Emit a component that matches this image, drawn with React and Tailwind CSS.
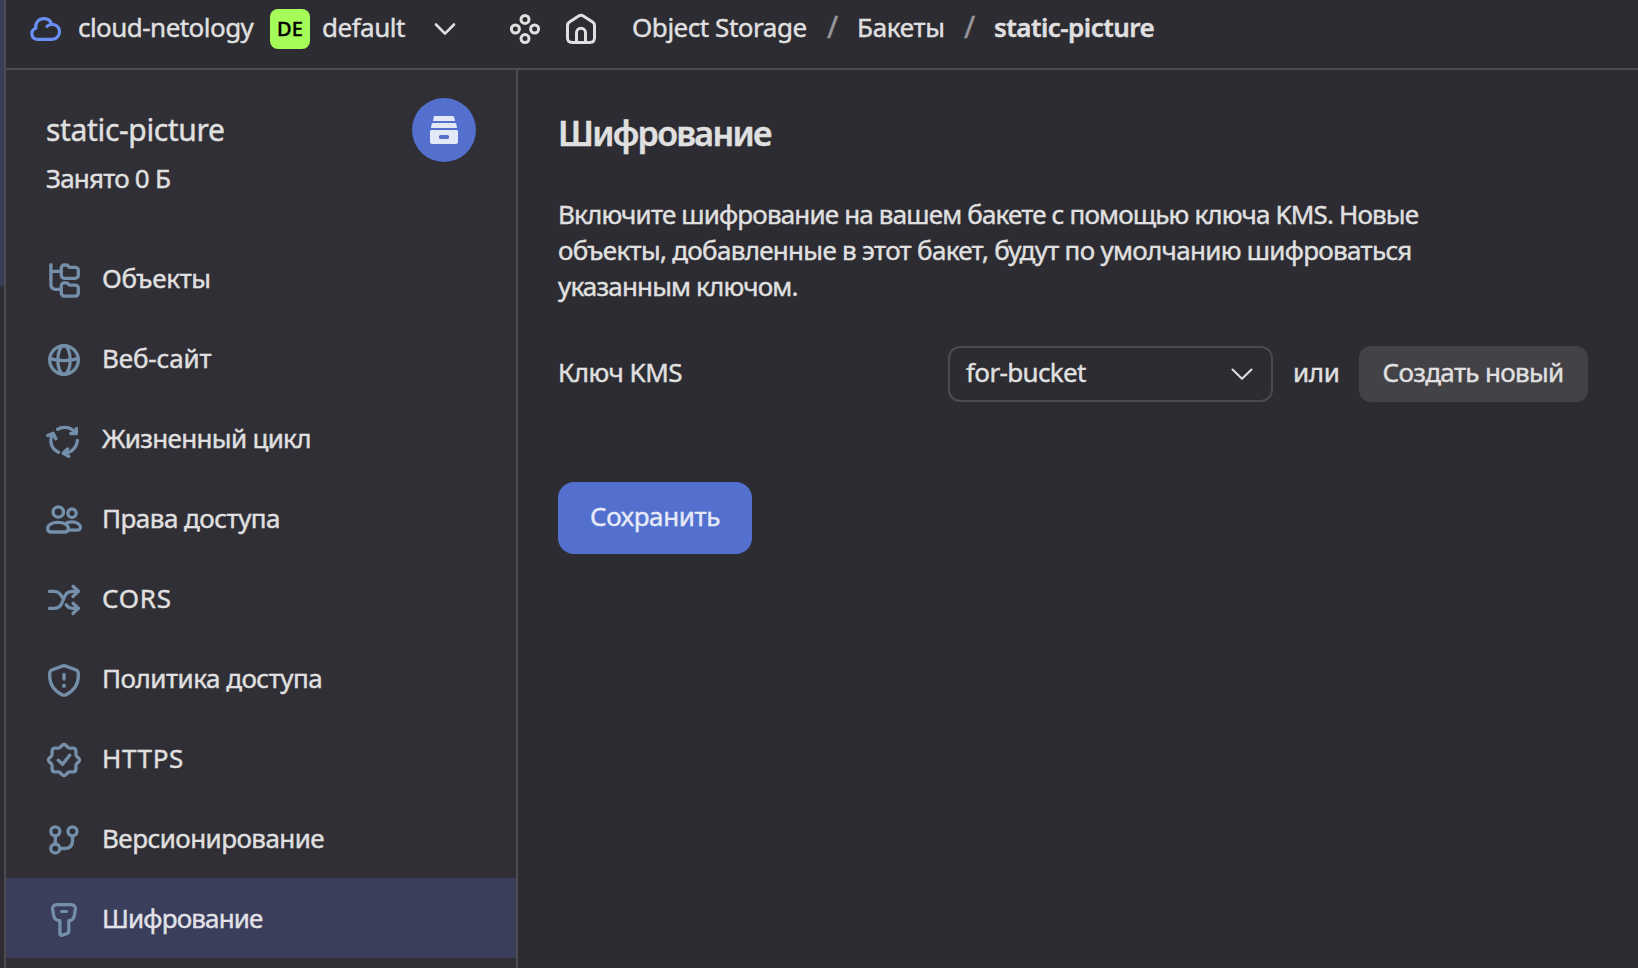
function Svg({ children, w = 36, h = 36, sw = 3.3, className = '' }) {
  return (
    <svg
      width={w}
      height={h}
      viewBox={`0 0 ${w} ${h}`}
      fill="none"
      stroke="currentColor"
      strokeWidth={sw}
      strokeLinecap="round"
      strokeLinejoin="round"
      className={`shrink-0 ${className}`}
    >
      {children}
    </svg>
  );
}

const SEAL = 'M18 2.5q1.2 0 2 .9l1.6 1.8q.9.9 2.2.9h3.1q3 0 3 3v3.1q0 1.3.9 2.2l1.8 1.6q.9.8.9 2';
const FOLDER = 'M15.3 6a3 3 0 0 1 3-3h2q1.1 0 1.8.9l.4.5q.7.9 1.8.9h5a3 3 0 0 1 3 3v5a3 3 0 0 1-3 3h-11a3 3 0 0 1-3-3z';

const icons = {
  objects: (
    <>
      <path d="M4.9 2.6v19.6q0 5.1 5 5.1h5M4.9 9.3h10" />
      <path d={FOLDER} />
      <path d={FOLDER} transform="translate(0 17.8)" />
    </>
  ),
  globe: (
    <>
      <circle cx="18" cy="18" r="14.3" />
      <ellipse cx="18" cy="18" rx="6.2" ry="14.3" />
      <path d="M4 16.6Q18 20.6 32 16.6" />
    </>
  ),
  cycle: (
    <>
      <path d="M11.600 7.200C17.500 4 25.500 5 30 11.300M30.400 6.300V11.500L24.800 11.500" />
      <path d="M31.300 18.400C31 25.500 25 31.200 17.400 31.100M21.500 26.900L17.300 31.200L22.700 34.300" />
      <path d="M12.400 30.200C4.500 26.500 3 18 7.200 11.400M1.800 13.500L7.200 11.300L9.800 16.800" />
    </>
  ),
  users: (
    <>
      <circle cx="12.300" cy="10" r="5.200" />
      <circle cx="26" cy="11.200" r="4.200" />
      <path d="M12 20.400C6 20.400 1.700 23 1.700 26.400c0 2.300 1.500 3.600 4 3.600h12.600c2.500 0 4-1.300 4-3.600 0-3.400-4.300-6-10.300-6z" />
      <path d="M21 20.600q2.200-.7 5-.7c5 0 8.400 2.600 8.400 5.300 0 1.900-1.300 2.900-3.400 2.900h-8.500" />
    </>
  ),
  shuffle: (
    <>
      <path d="M3.400 26.300h4.300c6.300 0 7.800-3.600 9.600-8.500s3.500-8.500 9-8.500h6" />
      <path d="M3.400 9.300h4.300c4.700 0 7 2.400 8.700 6.300M20.200 22.800c1.300 2.500 3 3.500 6.100 3.500h6" />
      <path d="M27 4.300L32.300 9.300L27 14.500M27 21.300L32.300 26.300L27 31.500" />
    </>
  ),
  shield: (
    <>
      <path d="M16.200 4.100L6.400 7.800a4 4 0 0 0-2.700 3.800V14c0 8.600 4.100 14.600 12.300 18.700a4.400 4.400 0 0 0 4 0C28.200 28.600 32.300 22.600 32.300 14v-2.400a4 4 0 0 0-2.700-3.800L19.800 4.100a5 5 0 0 0-3.600 0z" />
      <path d="M18 12.400v4.700" />
      <circle cx="18" cy="23.800" r="2.100" fill="currentColor" stroke="none" />
    </>
  ),
  seal: (
    <>
      <path d={SEAL} />
      <path d={SEAL} transform="rotate(90 18 18)" />
      <path d={SEAL} transform="rotate(180 18 18)" />
      <path d={SEAL} transform="rotate(270 18 18)" />
      <path d="M12.300 18.300L16.600 22.300L23.700 13.200" />
    </>
  ),
  branch: (
    <>
      <circle cx="9.300" cy="9.300" r="4.500" />
      <circle cx="26.500" cy="9.300" r="4.500" />
      <circle cx="9.300" cy="26.500" r="4.500" />
      <path d="M9.300 14v8M26.500 14v4.500q0 8-8 8H14" />
    </>
  ),
  key: (
    <>
      <path d="M11 2.700H25C28.300 2.700 29.700 4.700 29.300 7.700L28.200 14C27.600 17 26 18.400 22.800 18.700V29.300Q22.800 31 21.300 31.500L16.300 33.100Q13.900 33.700 13.900 31.500V18.700C10 18.400 8.400 17 7.800 14L6.700 7.700C6.300 4.700 7.700 2.700 11 2.700z" />
      <path d="M15.600 9.400h5" strokeWidth="3" />
    </>
  ),
};

const items = [
  ['objects', 'Объекты', 'tracking-[-0.35px]'],
  ['globe', 'Веб-сайт', 'tracking-[-0.15px]'],
  ['cycle', 'Жизненный цикл', 'tracking-[-0.68px]'],
  ['users', 'Права доступа', 'tracking-[-0.52px]'],
  ['shuffle', 'CORS', 'tracking-[0.8px]'],
  ['shield', 'Политика доступа', 'tracking-[-0.5px]'],
  ['seal', 'HTTPS', 'tracking-[0.65px]'],
  ['branch', 'Версионирование', 'tracking-[-0.55px]'],
  ['key', 'Шифрование', 'tracking-[-0.85px]'],
];

function Header() {
  return (
    <header className="flex h-[70px] shrink-0 items-center border-b-2 border-[#4c4b50] pb-[10px] pl-[22px]">
      <Svg w={34} h={26} sw={3.2} className="text-[#6a8ff5]">
        <path d="M8.500 23.300A5.700 5.700 0 0 1 7.800 12.300C7 6.500 11 2.600 16 2.600c4 0 6.700 2.200 7.700 5.800 4.800 0 7.800 3.200 7.800 7.300 0 4.400-3.200 7.600-7.500 7.600z" />
        <path d="M23.800 8.500q-2.700 0-4.800 1.900" />
      </Svg>
      <span className="ml-4 w-[192px] pb-[5px] tracking-[-0.54px]">cloud-netology</span>
      <span className="flex size-10 items-center justify-center rounded-lg bg-[#a5fb58] text-[20px] font-medium text-black">DE</span>
      <span className="ml-3 w-[111px] pb-[5px] tracking-[-0.5px]">default</span>
      <Svg w={24} h={20} sw={2.6}>
        <path d="M3 5.500L12 14.600L21 5.500" />
      </Svg>
      <Svg w={34} h={34} sw={3} className="ml-[51px]">
        <circle cx="17" cy="7.400" r="4" />
        <circle cx="7.400" cy="17" r="4" />
        <circle cx="26.600" cy="17" r="4" />
        <circle cx="17" cy="26.600" r="4" />
      </Svg>
      <Svg w={34} h={34} sw={3} className="ml-[22px]">
        <path d="M3.500 13.600q0-2.300 1.900-3.500l9.300-6q2.300-1.500 4.600 0l9.300 6q1.900 1.200 1.900 3.500v12.200q0 4.700-4.700 4.700H8.200q-4.700 0-4.700-4.700z" />
        <path d="M12.500 30v-9.200a4.500 4.500 0 0 1 9 0V30" />
      </Svg>
      <span className="ml-[34px] w-[195px] pb-[5px] tracking-[-0.46px]">Object Storage</span>
      <span className="w-[30px] pb-[5px] text-[30px] text-[#98979a]">/</span>
      <span className="w-[107px] pb-[5px] tracking-[-0.3px]">Бакеты</span>
      <span className="w-[30px] pb-[5px] text-[30px] text-[#98979a]">/</span>
      <span className="pb-[5px] font-semibold tracking-[-0.54px]">static-picture</span>
    </header>
  );
}

function Sidebar() {
  return (
    <aside className="flex w-[512px] shrink-0 flex-col border-r-2 border-[#4c4b50] bg-[#312f36]">
      <div className="flex h-[168px] shrink-0 justify-between pt-7 pr-10 pl-10">
        <div>
          <div className="pt-3 text-[30px] leading-10 tracking-[-0.34px]">static-picture</div>
          <div className="pt-[10px] leading-9 tracking-[-0.8px]">Занято 0 Б</div>
        </div>
        <div className="flex size-16 items-center justify-center rounded-full bg-[#5370cf] text-[#e4e9f8]">
          <svg width="28" height="28" viewBox="0 0 28 28" fill="currentColor">
            <path d="M4.600 0h17.800a2 2 0 0 1 2 2L25 5H3l.6-3a2 2 0 0 1 1-2zM3 7h22a1.500 1.500 0 0 1 1.400 1.200L27 12H1l.6-3.800A1.500 1.500 0 0 1 3 7z" />
            <path fillRule="evenodd" d="M1.500 14h25A1.500 1.500 0 0 1 28 15.500V26a2 2 0 0 1-2 2H2a2 2 0 0 1-2-2V15.500A1.500 1.500 0 0 1 1.500 14zM10.800 19a1.900 1.900 0 0 0 0 4h6.400a1.900 1.900 0 0 0 0-4z" />
          </svg>
        </div>
      </div>
      <nav>
        {items.map(([icon, label, tracking]) => (
          <div
            key={icon}
            className={`flex h-20 items-center gap-5 pl-10 ${icon === 'key' ? 'bg-[#3b3e5b] text-[#e2e2e8]' : ''}`}
          >
            <Svg className="mt-1 text-[#748fa9]">{icons[icon]}</Svg>
            <span className={tracking}>{label}</span>
          </div>
        ))}
      </nav>
    </aside>
  );
}

function Content() {
  return (
    <main className="flex grow flex-col items-start pt-[43px] pl-10">
      <h1 className="text-[34px] leading-10 font-semibold tracking-[-1.7px]">Шифрование</h1>
      <p className="mt-[43px] leading-9">
        <span className="block tracking-[-0.84px]">Включите шифрование на вашем бакете с помощью ключа KMS. Новые</span>
        <span className="block tracking-[-0.7px]">объекты, добавленные в этот бакет, будут по умолчанию шифроваться</span>
        <span className="block tracking-[-0.84px]">указанным ключом.</span>
      </p>
      <div className="mt-[42px] flex h-14 items-center">
        <span className="w-[390px] pb-[5px] tracking-[-0.5px]">Ключ KMS</span>
        <div className="flex h-14 w-[325px] items-center justify-between rounded-xl border-2 border-[#4c4b50] pr-[17px] pl-4">
          <span className="pb-[5px] tracking-[-0.64px]">for-bucket</span>
          <Svg w={24} h={20} sw={2}>
            <path d="M2.500 5.500L12 14.800L21.500 5.500" />
          </Svg>
        </div>
        <span className="ml-5 w-[66px] pb-[5px] tracking-[-0.3px]">или</span>
        <button className="flex h-14 w-[229px] items-center justify-center rounded-xl bg-[#434246] pr-[1px] pb-[5px] tracking-[-0.67px]">
          Создать новый
        </button>
      </div>
      <button className="mt-20 flex h-[72px] w-[194px] items-center justify-center rounded-2xl bg-[#5370cf] pb-[5px] tracking-[-0.4px] text-[#e6eaf8]">
        Сохранить
      </button>
    </main>
  );
}

export default function App() {
  return (
    <div className="flex h-[968px] w-[1638px] overflow-hidden bg-[#2d2c32] font-['Noto_Sans','Open_Sans',sans-serif] text-[26px] leading-9 whitespace-nowrap text-[#e0e0e0] [-webkit-text-stroke:0.4px_currentColor]">
      <div className="w-1.5 shrink-0 border-r-2 border-[#4c4b50]">
        <div className="h-[287px] w-1 rounded-br bg-[#393b57]" />
      </div>
      <div className="flex grow flex-col">
        <Header />
        <div className="flex min-h-0 grow">
          <Sidebar />
          <Content />
        </div>
      </div>
    </div>
  );
}
